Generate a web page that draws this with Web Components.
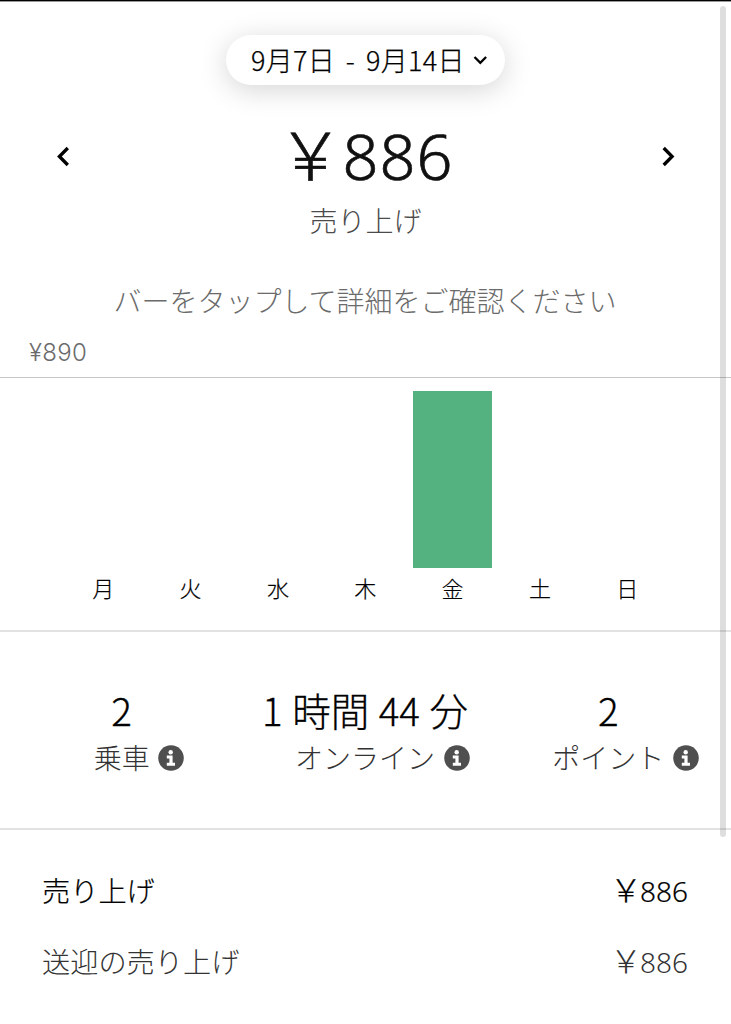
<!DOCTYPE html>
<html lang="ja">
<head>
<meta charset="utf-8">
<title>売り上げ</title>
<style>
  body {
    margin: 0;
    background: #fff;
    color: #000;
    font-family: "Noto Sans CJK JP", sans-serif;
    font-weight: 300;
  }
</style>
</head>
<body>
<earnings-page></earnings-page>

<script>
class BaseElement extends HTMLElement {
  constructor() {
    super();
    this.attachShadow({ mode: 'open' });
  }

  connectedCallback() {
    this.shadowRoot.innerHTML = this.render();
  }
}

class ChevronIcon extends BaseElement {
  render() {
    const paths = {
      left: 'M12.8 2 L4.4 10.5 L12.8 19',
      right: 'M3.7 2 L12.1 10.5 L3.7 19',
      down: 'M1.5 2 L7.3 7.8 L13.1 2'
    };
    const dir = this.getAttribute('dir');
    const [w, h, stroke] = dir === 'down' ? [15, 11, 2.3] : [16, 21, 3.3];
    return `
      <style>
        :host { display: block; line-height: 0; }
      </style>
      <svg width="${w}" height="${h}" viewBox="0 0 ${w} ${h}" fill="none" stroke="#000" stroke-width="${stroke}">
        <path d="${paths[dir]}"/>
      </svg>
    `;
  }
}
customElements.define('chevron-icon', ChevronIcon);

class InfoIcon extends BaseElement {
  render() {
    return `
      <style>
        :host { display: block; width: 26px; height: 26px; }
        svg { display: block; }
      </style>
      <svg width="26" height="26" viewBox="0 0 26 26">
        <circle cx="13" cy="13" r="12.8" fill="#4f4f4f"/>
        <circle cx="12.7" cy="7.2" r="2.2" fill="#fff"/>
        <path d="M8.8 10.6h5.8v7.2h2.4v2.9H8.8v-2.9h2.6v-4.3H8.8z" fill="#fff"/>
      </svg>
    `;
  }
}
customElements.define('info-icon', InfoIcon);

class DatePill extends BaseElement {
  render() {
    return `
      <style>
        :host {
          display: flex;
          align-items: center;
          box-sizing: border-box;
          width: 279px;
          height: 50px;
          padding: 0 17px 0 25px;
          justify-content: space-between;
          border-radius: 25px;
          background: #fff;
          box-shadow: 0 5px 28px rgba(0, 0, 0, .17);
          font-size: 27px;
          line-height: 50px;
          letter-spacing: .3px;
          word-spacing: 4.5px;
          white-space: nowrap;
          -webkit-text-stroke: .25px;
        }
      </style>
      <span><slot></slot></span>
      <chevron-icon dir="down"></chevron-icon>
    `;
  }
}
customElements.define('date-pill', DatePill);

class YenAmount extends BaseElement {
  render() {
    return `
      <style>
        :host { display: flex; align-items: baseline; white-space: nowrap; }
        .yen { font-size: var(--yen-size, 32px); margin-right: var(--yen-gap, -2px); }
        .num {
          font-family: "Noto Sans", "Noto Sans CJK JP", sans-serif;
          font-size: var(--num-size, 28px);
          letter-spacing: var(--num-spacing, 0);
        }
      </style>
      <span class="yen">￥</span><span class="num"><slot></slot></span>
    `;
  }
}
customElements.define('yen-amount', YenAmount);

class EarningsHeader extends BaseElement {
  render() {
    return `
      <style>
        :host {
          display: flex;
          flex-direction: column;
          align-items: center;
          height: 377px;
          box-sizing: border-box;
          border-top: 1px solid #000;
          box-shadow: inset 0 1px #999;
          padding-top: 34px;
        }
        .nav {
          display: flex;
          align-self: stretch;
          align-items: center;
          justify-content: space-between;
          height: 80px;
          margin-top: 31px;
          padding: 0 55px;
        }
        yen-amount {
          --yen-size: 66px;
          --yen-gap: -1px;
          --num-size: 63px;
          --num-spacing: 1px;
          height: 91px;
          line-height: 80px;
          color: #111;
          -webkit-text-stroke: .7px;
        }
        .caption { font-size: 28px; line-height: 40px; margin-top: 4px; color: #4b4b4b; }
        .hint { font-size: 28px; line-height: 40px; margin: 40px 1px 0 0; color: #6b6b6b; }
        .max {
          align-self: flex-start;
          margin: 16px 0 0 29px;
          font: 300 24px/34px Inter, "Noto Sans CJK JP", sans-serif;
          letter-spacing: .3px;
          color: #6b6b6b;
        }
      </style>
      <date-pill>9月7日 - 9月14日</date-pill>
      <div class="nav">
        <chevron-icon dir="left"></chevron-icon>
        <yen-amount>886</yen-amount>
        <chevron-icon dir="right"></chevron-icon>
      </div>
      <div class="caption">売り上げ</div>
      <div class="hint">バーをタップして詳細をご確認ください</div>
      <div class="max">¥890</div>
    `;
  }
}
customElements.define('earnings-header', EarningsHeader);

class DayBar extends BaseElement {
  render() {
    const height = this.getAttribute('height') || 0;
    return `
      <style>
        :host {
          display: flex;
          flex-direction: column;
          align-items: center;
          justify-content: flex-end;
          font-size: 22px;
          line-height: 32px;
          -webkit-text-stroke: .2px;
        }
        .bar { width: 78.6px; height: ${height}px; background: #53b280; margin-bottom: 3px; }
      </style>
      <div class="bar"></div>
      <slot></slot>
    `;
  }
}
customElements.define('day-bar', DayBar);

class WeekChart extends BaseElement {
  render() {
    return `
      <style>
        :host {
          display: grid;
          grid-template-columns: repeat(7, 1fr);
          height: 255px;
          box-sizing: border-box;
          border-top: 1px solid #c8c8c8;
          border-bottom: 2px solid #e2e2e2;
          padding: 0 60px 27px 59.5px;
        }
      </style>
      <slot></slot>
    `;
  }
}
customElements.define('week-chart', WeekChart);

class StatItem extends BaseElement {
  render() {
    return `
      <style>
        :host { display: flex; flex-direction: column; align-items: center; white-space: nowrap; }
        .value {
          font-size: 38.5px;
          line-height: 54px;
          word-spacing: 1px;
          margin-bottom: 2px;
          -webkit-text-stroke: .3px;
        }
        .label {
          display: flex;
          align-items: center;
          gap: 8.5px;
          font-size: 28px;
          line-height: 38px;
          color: #333;
        }
        /* the icon hangs outside so the label stays centred under the value */
        info-icon { margin: 1px -34.5px 0 0; }
      </style>
      <div class="value"><slot></slot></div>
      <div class="label"><span>${this.getAttribute('label')}</span><info-icon></info-icon></div>
    `;
  }
}
customElements.define('stat-item', StatItem);

class StatRow extends BaseElement {
  render() {
    return `
      <style>
        :host {
          display: grid;
          grid-template-columns: repeat(3, 1fr);
          height: 198px;
          box-sizing: border-box;
          border-bottom: 2px solid #e2e2e2;
          padding: 50px 1px 0 0;
        }
      </style>
      <slot></slot>
    `;
  }
}
customElements.define('stat-row', StatRow);

class BreakdownRow extends BaseElement {
  render() {
    return `
      <style>
        :host {
          display: flex;
          justify-content: space-between;
          align-items: center;
          height: 71px;
          padding: 0 43px 0 42px;
          font-size: 28.2px;
          -webkit-text-stroke: .2px;
        }
        :host([muted]) { color: #333; -webkit-text-stroke: 0; }
        yen-amount { line-height: 40px; }
      </style>
      <span>${this.getAttribute('label')}</span>
      <yen-amount><slot></slot></yen-amount>
    `;
  }
}
customElements.define('breakdown-row', BreakdownRow);

class EarningsPage extends BaseElement {
  render() {
    return `
      <style>
        :host { display: block; position: relative; height: 1024px; overflow: hidden; }
        .breakdown { padding-top: 24px; }
        .scrollbar {
          position: absolute;
          top: 6px;
          right: 5px;
          width: 6px;
          height: 831px;
          border-radius: 3px;
          background: rgba(0, 0, 0, .13);
        }
      </style>
      <earnings-header></earnings-header>
      <week-chart>
        <day-bar>月</day-bar>
        <day-bar>火</day-bar>
        <day-bar>水</day-bar>
        <day-bar>木</day-bar>
        <day-bar height="177">金</day-bar>
        <day-bar>土</day-bar>
        <day-bar>日</day-bar>
      </week-chart>
      <stat-row>
        <stat-item label="乗車">2</stat-item>
        <stat-item label="オンライン">1 時間 44 分</stat-item>
        <stat-item label="ポイント">2</stat-item>
      </stat-row>
      <div class="breakdown">
        <breakdown-row label="売り上げ">886</breakdown-row>
        <breakdown-row label="送迎の売り上げ" muted>886</breakdown-row>
      </div>
      <div class="scrollbar"></div>
    `;
  }
}
customElements.define('earnings-page', EarningsPage);
</script>
</body>
</html>
